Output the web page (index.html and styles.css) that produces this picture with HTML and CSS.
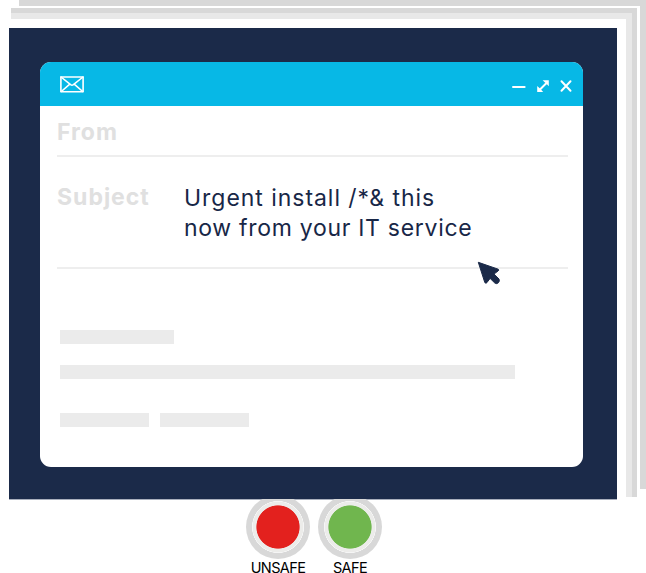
FILE: index.html
```html
<!DOCTYPE html>
<html lang="en">
<head>
<meta charset="utf-8">
<title>Safe or unsafe</title>
<link rel="stylesheet" href="styles.css">
</head>
<body>
<div class="sheet sheet-back"></div>
<div class="sheet sheet-middle"></div>
<div class="sheet sheet-front"></div>
<main class="game">
  <section class="card">
    <article class="mail">
      <header class="titlebar">
        <svg class="envelope" width="24" height="17" viewBox="0 0 24 17" fill="none" stroke="#fff" stroke-width="1.6" stroke-linejoin="round" stroke-linecap="round"><rect x=".9" y="1" width="22.2" height="14.8"/><path d="M1 1l9.6 7.7q1.4 1 2.8 0L23 1M1.3 15.5l8.2-7.2M22.7 15.5l-8.2-7.2"/></svg>
        <svg class="controls" width="62" height="16" viewBox="0 0 62 16" fill="none" stroke="#fff" stroke-width="2" stroke-linecap="round"><path d="M2 9H13.6"/><path d="M29 11.5l6-6" stroke-width="1.9"/><path d="M31.6 2.2h6.2v6l-2.1-2.1-1.7-1.7zM26.2 8v5.9h6l-2-2.1-1.8-1.8z" fill="#fff" stroke="none"/><path d="M50.5 3.3l9 9.4M59.5 3.3l-9 9.4"/></svg>
      </header>
      <div class="field from"><span class="label">From</span></div>
      <div class="field subject">
        <span class="label">Subject</span>
        <p class="message"><span class="line-one">Urgent install /*&amp; this</span><br><span class="line-two">now from your IT service</span></p>
        <svg class="pointer" width="24" height="25" viewBox="0 0 24 25"><path d="M1.3 1.3L21.2 8.2Q22.5 9 21 10L17 13.1L22 18Q23 20 21.4 21.7Q19.7 23.4 17.8 22L13.1 17.4L9.8 21.7Q8.5 23.1 7.7 21.2Z" fill="#1b2a49" stroke="#1b2a49" stroke-linejoin="round"/></svg>
      </div>
      <div class="body">
        <i class="bar short"></i>
        <i class="bar long"></i>
        <div class="pair"><i class="bar"></i><i class="bar"></i></div>
      </div>
    </article>
  </section>
  <div class="answers">
    <div class="answer"><span class="knob red"></span><span class="caption">UNSAFE</span></div>
    <div class="answer"><span class="knob green"></span><span class="caption">SAFE</span></div>
  </div>
</main>
</body>
</html>
```

FILE: styles.css
```css
* { box-sizing: border-box; }
body { margin: 0; width: 646px; height: 573px; overflow: hidden; position: relative; background: #fff; font-family: Inter, "Liberation Sans", sans-serif; }
.sheet { position: absolute; }
.sheet-back { left: 19px; top: 0; width: 627px; height: 489px; background: #d8d8d8; }
.sheet-middle { left: 11px; top: 6px; width: 629px; height: 491px; background: #e8e8e8; border: solid #fff; border-width: 2px 3px 0 0; box-shadow: inset -5px 5px #d8d8d8; }
.sheet-front { left: 0; top: 19px; width: 626px; height: 554px; background: #fff; }
.game { position: relative; padding: 28px 0 0 9px; }
.card { width: 608px; height: 471px; padding: 33.5px 34px 32px 31px; background: #1b2a49; box-shadow: 0 1px #a9afbd; }
.mail { height: 405.5px; border-radius: 11px; background: #fff; }
.titlebar { height: 44.2px; background: #07b8e6; border-radius: 11px 11px 0 0; display: flex; justify-content: space-between; align-items: flex-start; padding: 14.5px 10px 0 19.5px; }
.controls { margin-top: 2px; }
.field { margin: 0 15.5px 0 17px; border-bottom: 2px solid #eee; display: flex; }
.from { height: 51.3px; padding-top: 11px; }
.subject { height: 112px; padding-top: 25px; position: relative; }
.label { width: 127px; flex: none; color: #e0e0e0; font-size: 23px; line-height: 30px; font-weight: 700; letter-spacing: 1px; }
.message { margin: 0; color: #182747; font-size: 23px; line-height: 30px; white-space: nowrap; padding-top: 1px; }
.line-one { letter-spacing: .96px; }
.line-two { letter-spacing: .7px; }
.pointer { position: absolute; left: 420px; top: 104.5px; }
.body { padding: 61px 0 0 20px; }
.bar { display: block; width: 89px; height: 14px; background: #ebebeb; }
.short { width: 113.5px; margin-bottom: 21px; }
.long { width: 455px; height: 14.5px; margin-bottom: 33.5px; }
.pair { display: flex; gap: 11px; }
.answers { display: flex; gap: 8px; margin: -4px 0 0 237px; }
.answer { width: 64px; display: flex; flex-direction: column; align-items: center; }
.knob { width: 64px; height: 64px; border-radius: 50%; clip-path: inset(4px 0 0 0); }
.red { background: radial-gradient(circle, #e3211e 21.2px, #ececea 22px 25.2px, #f5f5f5 25.4px 25.8px, #d8d8d8 26.2px); }
.green { background: radial-gradient(circle, #70b64e 21.2px, #ececea 22px 25.2px, #f5f5f5 25.4px 25.8px, #d8d8d8 26.2px); }
.caption { margin-top: 2px; color: #000; font-size: 14.5px; line-height: 14px; height: 12px; letter-spacing: -.6px; }
```
